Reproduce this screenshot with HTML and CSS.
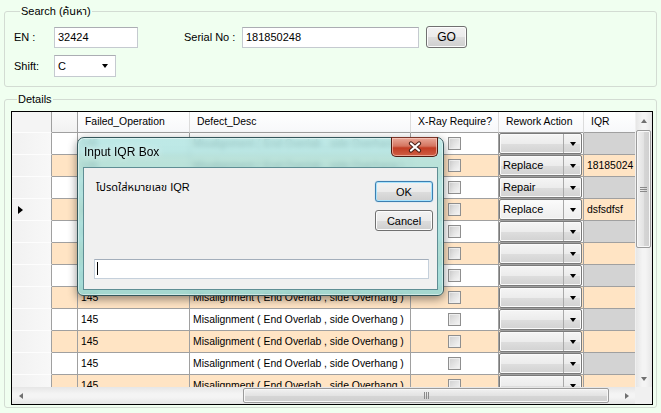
FILE: index.html
```html
<!DOCTYPE html>
<html>
<head>
<meta charset="utf-8">
<title>Input IQR</title>
<link rel="stylesheet" href="styles.css">
</head>
<body>
<fieldset class="group search">
  <legend>Search (ค้นหา)</legend>
  <div class="form-row">
    <span class="lbl">EN :</span>
    <div class="textbox tb-en">32424</div>
    <span class="lbl lbl-serial">Serial No :</span>
    <div class="textbox tb-serial">181850248</div>
    <div class="btn btn-go">GO</div>
  </div>
  <div class="form-row row2">
    <span class="lbl">Shift:</span>
    <div class="shift-combo"><span class="shift-val">C</span><span class="tri"></span></div>
  </div>
</fieldset>

<fieldset class="group details">
  <legend>Details</legend>
  <div class="grid">
    <div class="viewport">
      <div class="row hdr">
        <div class="cell rh"></div>
        <div class="cell c2"></div>
        <div class="cell">Failed_Operation</div>
        <div class="cell">Defect_Desc</div>
        <div class="cell">X-Ray Require?</div>
        <div class="cell">Rework Action</div>
        <div class="cell last">IQR</div>
      </div>
      <div class="row odd">
        <div class="cell rh"></div><div class="cell c2"></div>
        <div class="cell">145</div><div class="cell">Misalignment ( End Overlab , side Overhang )</div>
        <div class="cell xr"><span class="chk"></span></div>
        <div class="cell ra"><div class="combo"><span class="combo-txt"></span><span class="combo-btn"><span class="tri"></span></span></div></div>
        <div class="cell iqr last"></div>
      </div>
      <div class="row even">
        <div class="cell rh"></div><div class="cell c2"></div>
        <div class="cell">145</div><div class="cell">Misalignment ( End Overlab , side Overhang )</div>
        <div class="cell xr"><span class="chk"></span></div>
        <div class="cell ra"><div class="combo"><span class="combo-txt">Replace</span><span class="combo-btn"><span class="tri"></span></span></div></div>
        <div class="cell iqr last">18185024</div>
      </div>
      <div class="row odd">
        <div class="cell rh"></div><div class="cell c2"></div>
        <div class="cell">145</div><div class="cell">Misalignment ( End Overlab , side Overhang )</div>
        <div class="cell xr"><span class="chk"></span></div>
        <div class="cell ra"><div class="combo"><span class="combo-txt">Repair</span><span class="combo-btn"><span class="tri"></span></span></div></div>
        <div class="cell iqr last"></div>
      </div>
      <div class="row even">
        <div class="cell rh"><span class="cur"></span></div><div class="cell c2"></div>
        <div class="cell">145</div><div class="cell">Misalignment ( End Overlab , side Overhang )</div>
        <div class="cell xr"><span class="chk"></span></div>
        <div class="cell ra"><div class="combo current"><span class="combo-txt">Replace</span><span class="combo-btn"><span class="tri"></span></span></div></div>
        <div class="cell iqr last">dsfsdfsf</div>
      </div>
      <div class="row odd">
        <div class="cell rh"></div><div class="cell c2"></div>
        <div class="cell">145</div><div class="cell">Misalignment ( End Overlab , side Overhang )</div>
        <div class="cell xr"><span class="chk"></span></div>
        <div class="cell ra"><div class="combo"><span class="combo-txt"></span><span class="combo-btn"><span class="tri"></span></span></div></div>
        <div class="cell iqr last"></div>
      </div>
      <div class="row even">
        <div class="cell rh"></div><div class="cell c2"></div>
        <div class="cell">145</div><div class="cell">Misalignment ( End Overlab , side Overhang )</div>
        <div class="cell xr"><span class="chk"></span></div>
        <div class="cell ra"><div class="combo"><span class="combo-txt"></span><span class="combo-btn"><span class="tri"></span></span></div></div>
        <div class="cell iqr last"></div>
      </div>
      <div class="row odd">
        <div class="cell rh"></div><div class="cell c2"></div>
        <div class="cell">145</div><div class="cell">Misalignment ( End Overlab , side Overhang )</div>
        <div class="cell xr"><span class="chk"></span></div>
        <div class="cell ra"><div class="combo"><span class="combo-txt"></span><span class="combo-btn"><span class="tri"></span></span></div></div>
        <div class="cell iqr last"></div>
      </div>
      <div class="row even">
        <div class="cell rh"></div><div class="cell c2"></div>
        <div class="cell">145</div><div class="cell">Misalignment ( End Overlab , side Overhang )</div>
        <div class="cell xr"><span class="chk"></span></div>
        <div class="cell ra"><div class="combo"><span class="combo-txt"></span><span class="combo-btn"><span class="tri"></span></span></div></div>
        <div class="cell iqr last"></div>
      </div>
      <div class="row odd">
        <div class="cell rh"></div><div class="cell c2"></div>
        <div class="cell">145</div><div class="cell">Misalignment ( End Overlab , side Overhang )</div>
        <div class="cell xr"><span class="chk"></span></div>
        <div class="cell ra"><div class="combo"><span class="combo-txt"></span><span class="combo-btn"><span class="tri"></span></span></div></div>
        <div class="cell iqr last"></div>
      </div>
      <div class="row even">
        <div class="cell rh"></div><div class="cell c2"></div>
        <div class="cell">145</div><div class="cell">Misalignment ( End Overlab , side Overhang )</div>
        <div class="cell xr"><span class="chk"></span></div>
        <div class="cell ra"><div class="combo"><span class="combo-txt"></span><span class="combo-btn"><span class="tri"></span></span></div></div>
        <div class="cell iqr last"></div>
      </div>
      <div class="row odd">
        <div class="cell rh"></div><div class="cell c2"></div>
        <div class="cell">145</div><div class="cell">Misalignment ( End Overlab , side Overhang )</div>
        <div class="cell xr"><span class="chk"></span></div>
        <div class="cell ra"><div class="combo"><span class="combo-txt"></span><span class="combo-btn"><span class="tri"></span></span></div></div>
        <div class="cell iqr last"></div>
      </div>
      <div class="row even">
        <div class="cell rh"></div><div class="cell c2"></div>
        <div class="cell">145</div><div class="cell">Misalignment ( End Overlab , side Overhang )</div>
        <div class="cell xr"><span class="chk"></span></div>
        <div class="cell ra"><div class="combo"><span class="combo-txt"></span><span class="combo-btn"><span class="tri"></span></span></div></div>
        <div class="cell iqr last"></div>
      </div>
    </div>
    <div class="vscroll">
      <div class="sb-btn"><span class="arr up"></span></div>
      <div class="v-track"><div class="v-thumb"><span class="grip-h"></span></div></div>
      <div class="sb-btn"><span class="arr down"></span></div>
    </div>
    <div class="hscroll">
      <div class="sb-btn"><span class="arr left"></span></div>
      <div class="h-track"><div class="h-thumb"><span class="grip-v"></span></div></div>
      <div class="sb-btn"><span class="arr right"></span></div>
    </div>
    <div class="corner"></div>
  </div>
</fieldset>

<div class="dialog">
  <div class="titlebar">
    <span class="title">Input IQR Box</span>
    <div class="close-btn">
      <svg width="14" height="12" viewBox="0 0 14 12">
        <path d="M3 2.5 L11 9.5 M11 2.5 L3 9.5" stroke="#4a2018" stroke-width="4.2" stroke-linecap="round" fill="none"/>
        <path d="M3 2.5 L11 9.5 M11 2.5 L3 9.5" stroke="#ffffff" stroke-width="2.2" stroke-linecap="round" fill="none"/>
      </svg>
    </div>
  </div>
  <div class="client">
    <div class="client-top">
      <div class="prompt">โปรดใส่หมายเลข IQR</div>
      <div class="btn-col">
        <div class="btn btn-dlg default">OK</div>
        <div class="btn btn-dlg">Cancel</div>
      </div>
    </div>
    <div class="dlg-input"><span class="caret"></span></div>
  </div>
</div>
</body>
</html>
```

FILE: styles.css
```css
* { box-sizing: border-box; }
html, body { margin: 0; padding: 0; }
body {
  position: relative;
  width: 661px;
  height: 413px;
  overflow: hidden;
  background: #f0fff0;
  padding: 4px 4px 0 4px;
  font-family: "Liberation Sans", "Noto Sans Thai", "Noto Sans", "DejaVu Sans", sans-serif;
  font-size: 11px;
  color: #000;
}

/* group boxes */
.group {
  margin: 0;
  min-width: 0;
  border: 1px solid #d3dcd3;
  border-radius: 3px;
}
.group legend {
  margin-left: 6px;
  padding: 0 1px;
  font-size: 11px;
  line-height: 14px;
}
.search { padding: 8px 0 9px 9px; }
.details { margin-top: 5px; padding: 5px 0 2px 6px; }

.form-row { display: flex; align-items: center; height: 22px; }
.row2 { margin-top: 7px; }
.lbl { width: 40px; white-space: nowrap; }
.lbl-serial { margin-left: 46px; width: 58px; }
.textbox {
  height: 21px;
  background: #fff;
  border: 1px solid #c5cad0;
  border-top-color: #abadb3;
  padding: 0 3px;
  line-height: 19px;
}
.tb-en { width: 84px; }
.tb-serial { width: 177px; }

.btn {
  display: flex;
  align-items: center;
  justify-content: center;
  border: 1px solid #707070;
  border-radius: 3px;
  background: linear-gradient(#f2f2f2 0%, #ebebeb 50%, #dddddd 51%, #cfcfcf 100%);
  box-shadow: inset 0 0 0 1px #fcfcfc;
}
.btn-go { margin-left: 7px; width: 41px; height: 22px; font-size: 12px; }

.shift-combo {
  width: 62px;
  height: 22px;
  background: #fff;
  border: 1px solid #c5cad0;
  border-top-color: #abadb3;
  display: flex;
  align-items: center;
  padding: 0 7px 0 3px;
}
.shift-val { flex: 1; }
.tri {
  width: 0;
  height: 0;
  border-left: 3.5px solid transparent;
  border-right: 3.5px solid transparent;
  border-top: 4px solid #000;
}

/* grid */
.grid {
  width: 642px;
  height: 294px;
  border: 1px solid #000;
  background: #fff;
  display: grid;
  grid-template-columns: 623px 17px;
  grid-template-rows: 275px 17px;
}
.viewport { overflow: hidden; font-size: 10.4px; }
.row {
  display: grid;
  grid-template-columns: 40px 26px 112px 221px 88px 85px 51px;
  height: 22px;
}
.row.hdr { height: 21px; }
.cell {
  border-right: 1px solid #a0a0a0;
  border-bottom: 1px solid #a0a0a0;
  padding-left: 3px;
  line-height: 21px;
  white-space: nowrap;
  overflow: hidden;
}
.cell.last { border-right: none; }
.hdr .cell {
  background: linear-gradient(#ffffff, #f7f8fa);
  border-right-color: #dcdcdc;
  padding-left: 7px;
  line-height: 20px;
}
.hdr .cell.rh { background: #f4f4f4; border-right-color: #a0a0a0; }
.hdr .cell.c2 { background: linear-gradient(#fafafa, #f1f1f1); border-right-color: #a0a0a0; }
.row .rh {
  background: linear-gradient(90deg, #f1f1f1, #f8f8f8);
  border-bottom-color: #fdfdfd;
  display: flex;
  align-items: center;
  padding-left: 6px;
}
.odd .cell { background-color: #fff; }
.even .cell { background-color: #ffe4c4; }
.odd .cell.rh, .even .cell.rh { background-color: transparent; }
.odd .cell.iqr { background-color: #d3d3d3; }
.cur {
  width: 0;
  height: 0;
  border-top: 4.5px solid transparent;
  border-bottom: 4.5px solid transparent;
  border-left: 5px solid #000;
}
.xr { display: flex; align-items: center; justify-content: center; padding-left: 0; }
.chk {
  width: 13px;
  height: 13px;
  border: 1px solid #8f8f8f;
  background: linear-gradient(135deg, #cfcfcf, #f7f7f7);
  box-shadow: inset 0 0 0 1px #eeeeee;
}
.ra { padding: 0 1px 0 0; display: flex; align-items: stretch; }
.combo {
  flex: 1;
  display: flex;
  border: 1px solid #7a7a7a;
  border-radius: 2px;
  background: linear-gradient(#f5f5f5 0%, #ececec 50%, #dedede 51%, #d2d2d2 100%);
  box-shadow: inset 0 0 0 1px #fafafa;
  height: 21px;
}
.combo.current { background: linear-gradient(#fbfbfb, #eeeeee); }
.combo-txt { flex: 1; padding-left: 3px; line-height: 19px; font-size: 11px; }
.combo-btn {
  width: 18px;
  border-left: 1px solid #a9a9a9;
  display: flex;
  align-items: center;
  justify-content: center;
}

/* scrollbars */
.vscroll {
  display: flex;
  flex-direction: column;
  background: linear-gradient(90deg, #e6e6e6, #f4f4f4 40%, #f4f4f4 60%, #e6e6e6);
  border-left: 1px solid #f0f0f0;
}
.hscroll {
  display: flex;
  background: linear-gradient(#e6e6e6, #f4f4f4 40%, #f4f4f4 60%, #e6e6e6);
}
.corner { background: #f0f0f0; }
.sb-btn {
  flex: 0 0 17px;
  height: 17px;
  display: flex;
  align-items: center;
  justify-content: center;
}
.v-track { flex: 1; padding: 1px 1px 0 0; }
.h-track { flex: 1; padding: 1px 0 0 214px; }
.v-thumb {
  height: 118px;
  border: 1px solid #9b9b9b;
  border-radius: 2px;
  background: linear-gradient(90deg, #f1f1f1, #e3e3e3 50%, #d6d6d6 51%, #cfcfcf);
  box-shadow: inset 0 0 0 1px #f8f8f8;
  display: flex;
  align-items: center;
  justify-content: center;
}
.h-thumb {
  width: 366px;
  height: 15px;
  border: 1px solid #9b9b9b;
  border-radius: 2px;
  background: linear-gradient(#f1f1f1, #e3e3e3 50%, #d6d6d6 51%, #cfcfcf);
  box-shadow: inset 0 0 0 1px #f8f8f8;
  display: flex;
  align-items: center;
  justify-content: center;
}
.grip-h {
  width: 7px;
  height: 5px;
  border-top: 1px solid #8a8a8a;
  border-bottom: 1px solid #8a8a8a;
  background: linear-gradient(transparent 1px, #8a8a8a 1px, #8a8a8a 2px, transparent 2px);
}
.grip-v {
  width: 5px;
  height: 7px;
  border-left: 1px solid #8a8a8a;
  border-right: 1px solid #8a8a8a;
  background: linear-gradient(90deg, transparent 1px, #8a8a8a 1px, #8a8a8a 2px, transparent 2px);
}
.arr { width: 0; height: 0; }
.arr.up { border-left: 3.5px solid transparent; border-right: 3.5px solid transparent; border-bottom: 4px solid #707070; }
.arr.down { border-left: 3.5px solid transparent; border-right: 3.5px solid transparent; border-top: 4px solid #707070; }
.arr.left { border-top: 3.5px solid transparent; border-bottom: 3.5px solid transparent; border-right: 4px solid #707070; }
.arr.right { border-top: 3.5px solid transparent; border-bottom: 3.5px solid transparent; border-left: 4px solid #707070; }

/* dialog */
.dialog {
  position: absolute;
  left: 77px;
  top: 137px;
  width: 367px;
  height: 159px;
  border: 1px solid #35575c;
  border-radius: 7px 7px 6px 6px;
  background: linear-gradient(rgba(176, 228, 225, 0.82), rgba(150, 214, 209, 0.86));
  backdrop-filter: blur(2.5px);
  box-shadow: 0 3px 10px rgba(0, 0, 0, 0.45), inset 0 0 0 1px rgba(255, 255, 255, 0.45);
  padding: 0 5px 5px 5px;
  display: flex;
  flex-direction: column;
}
.titlebar {
  height: 29px;
  display: flex;
  justify-content: space-between;
  align-items: flex-start;
}
.title {
  margin: 7px 0 0 1px;
  font-size: 12px;
  line-height: 15px;
  color: #000;
  text-shadow: 0 0 6px rgba(255, 255, 255, 0.8);
}
.close-btn {
  margin-top: -1px;
  width: 47px;
  height: 20px;
  border: 1px solid #4f1a10;
  border-top-color: #7a3428;
  border-radius: 0 0 5px 5px;
  background: linear-gradient(#e8a898 0%, #d47560 45%, #c23d24 55%, #cf5f44 100%);
  box-shadow: inset 0 0 0 1px rgba(255, 210, 200, 0.6);
  display: flex;
  align-items: center;
  justify-content: center;
}
.client {
  flex: 1;
  background: #f0f0f0;
  border: 1px solid #5f8e94;
  padding: 12px 4px 10px 10px;
  display: flex;
  flex-direction: column;
}
.client-top { display: flex; justify-content: space-between; }
.prompt { padding: 0 0 0 2px; line-height: 14px; font-size: 11px; }
.btn-col { display: flex; flex-direction: column; gap: 8px; padding-top: 1px; }
.btn-dlg { width: 58px; height: 21px; font-size: 11px; }
.btn-dlg.default {
  border-color: #3c7fb1;
  box-shadow: inset 0 0 0 1px #a8e3fd, 0 0 1px #5ab0e0;
}
.dlg-input {
  margin-top: auto;
  width: 335px;
  height: 20px;
  background: #fff;
  border: 1px solid #c5d0db;
  border-top-color: #a3aebb;
  padding: 2px 0 0 2px;
}
.caret { display: block; width: 1px; height: 13px; background: #000; }
```
